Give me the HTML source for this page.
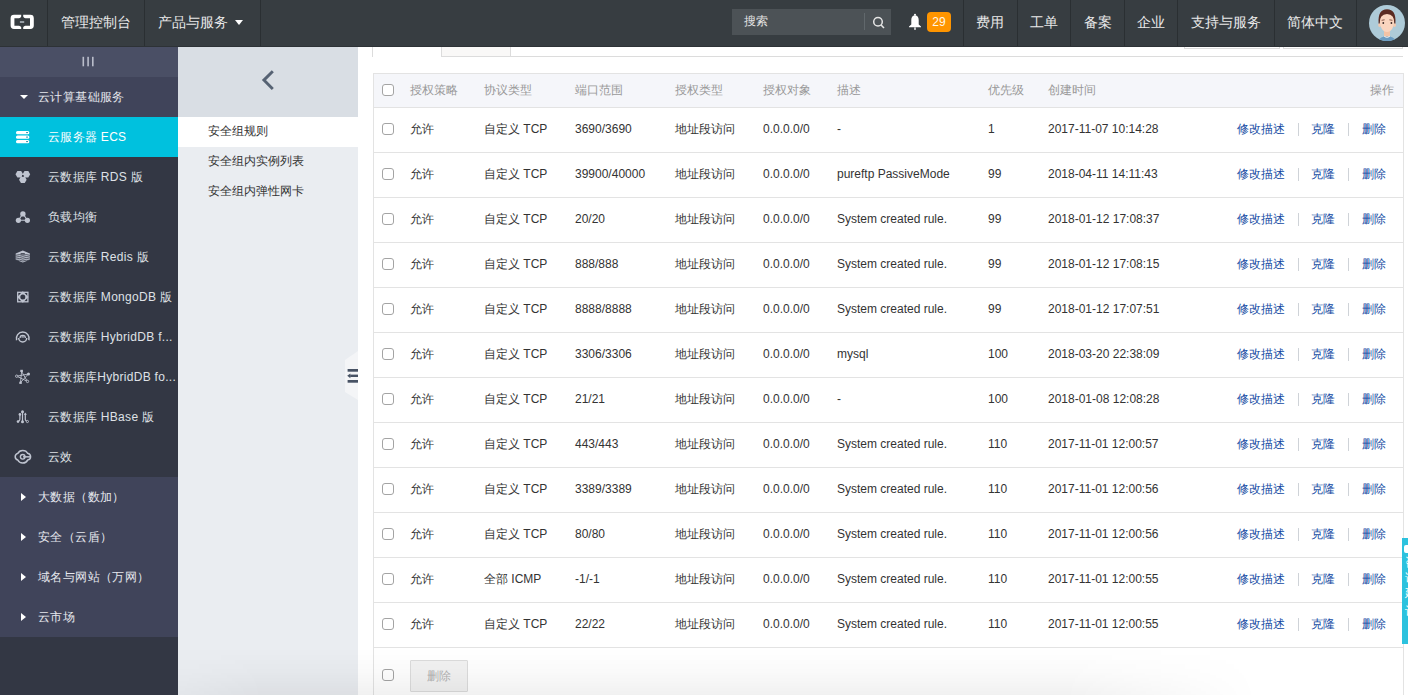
<!DOCTYPE html>
<html><head><meta charset="utf-8">
<style>
*{box-sizing:border-box;margin:0;padding:0}
html,body{width:1408px;height:695px;overflow:hidden;background:#fff;font-family:"Liberation Sans",sans-serif;font-size:12px;color:#333;position:relative}
div{position:absolute;white-space:nowrap}
#top{left:0;top:0;width:1408px;height:47px;background:#373d41;border-bottom:1px solid #2d3236;z-index:5}
.sec{top:0;height:46px;line-height:44px;font-size:14px;color:#e9e9e9}
.vs{top:0;width:1px;height:46px;background:#2a2f32}
#side{left:0;top:47px;width:178px;height:649px;background:#333744}
#main{left:358px;top:46px;width:1050px;height:649px}
.it{left:0;width:178px;height:40px;line-height:40px;color:#dfe1e6;font-size:12px}
.it .t{left:48px;top:0;letter-spacing:.3px}
.it .ic{left:16px;top:13px;width:14px;height:14px}
.grp{left:0;width:178px;height:40px;line-height:40px;color:#e6e8ee;background:#40445a}
.grp .t{left:38px;top:0;letter-spacing:.4px}
.tri{left:21px;top:16px;width:0;height:0;border-top:4px solid transparent;border-bottom:4px solid transparent;border-left:5px solid #fff}
#side2{left:178px;top:47px;width:180px;height:649px;background:#eaedf1}
.s2{left:0;width:180px;height:30px;line-height:28px;padding-left:30px;color:#333;font-size:12px}
.tbl{border:1px solid #e3e3e3;background:#fff}
.thead{background:#f5f6fa}
.th{height:34px;line-height:34px;color:#999;font-size:12px}
.td{height:45px;line-height:45px;color:#333;font-size:12px}
.a{color:#154ba3}
.hl{left:374px;width:1029px;height:1px;background:#e3e3e3}
.cb{width:12px;height:12px;border:1px solid #a4a4a4;border-radius:3px;background:#fff}
.sep{width:1px;height:13px;background:#cfd3d8}
.btn{width:58px;height:32px;line-height:30px;text-align:center;border:1px solid #dcdcdc;background:#f2f2f2;color:#b3b3b3;border-radius:1px}
</style></head>
<body>
<div id="top">
  <svg style="position:absolute;left:10px;top:14px" width="25" height="16" viewBox="0 0 25 16">
    <path d="M11.2 0.8 H4 Q0.6 0.8 0.6 4.2 V11.5 Q0.6 14.9 4 14.9 H11.2 V13.2 Q10.6 11.7 9 11.7 H4.4 V4.3 H9 Q10.6 4.3 11.2 2.5 Z" fill="#fff"/>
    <path d="M13.2 0.8 H20.4 Q23.8 0.8 23.8 4.2 V11.5 Q23.8 14.9 20.4 14.9 H13.2 V13.2 Q13.8 11.7 15.4 11.7 H20 V4.3 H15.4 Q13.8 4.3 13.2 2.5 Z" fill="#fff"/>
    <rect x="9.9" y="7.1" width="4.3" height="1.8" fill="#a0a8b0"/>
  </svg>
  <div class="vs" style="left:47px"></div>
  <div class="sec" style="left:61px">管理控制台</div>
  <div class="vs" style="left:144px"></div>
  <div class="sec" style="left:158px">产品与服务</div>
  <div style="left:235px;top:20px;width:0;height:0;border-left:4.5px solid transparent;border-right:4.5px solid transparent;border-top:5px solid #fff"></div>
  <div class="vs" style="left:260px"></div>

  <div style="left:732px;top:9px;width:159px;height:26px;background:#4c5256"></div>
  <div style="left:744px;top:0;height:43px;line-height:43px;font-size:12px;color:#e3e3e3">搜索</div>
  <div style="left:864px;top:13px;width:1px;height:17px;background:#61686c"></div>
  <svg style="position:absolute;left:872px;top:16px" width="13" height="13" viewBox="0 0 13 13">
    <circle cx="6" cy="5.7" r="4.3" fill="none" stroke="#e5e5e5" stroke-width="1.5"/>
    <path d="M8.8 8.8 L12 12" stroke="#e5e5e5" stroke-width="1.6"/>
  </svg>
  <svg style="position:absolute;left:908px;top:13px" width="14" height="18" viewBox="0 0 14 18">
    <circle cx="7" cy="1.7" r="1" fill="#fff"/>
    <path d="M7 2.3 C4.3 2.3 3.3 4.5 3.3 7 V11.6 L1 13.6 V14.2 H13 V13.6 L10.7 11.6 V7 C10.7 4.5 9.7 2.3 7 2.3 Z" fill="#fff"/>
    <rect x="6.3" y="14.4" width="1.4" height="2.5" fill="#fff"/>
  </svg>
  <div style="left:927px;top:12px;width:24px;height:20px;background:#ff9500;border-radius:4px;color:#fff7e8;font-size:12px;line-height:20px;text-align:center">29</div>
  <div class="vs" style="left:963px"></div>
  <div class="sec" style="left:976px">费用</div>
  <div class="vs" style="left:1017px"></div>
  <div class="sec" style="left:1030px">工单</div>
  <div class="vs" style="left:1070px"></div>
  <div class="sec" style="left:1084px">备案</div>
  <div class="vs" style="left:1124px"></div>
  <div class="sec" style="left:1137px">企业</div>
  <div class="vs" style="left:1177px"></div>
  <div class="sec" style="left:1191px">支持与服务</div>
  <div class="vs" style="left:1274px"></div>
  <div class="sec" style="left:1287px">简体中文</div>
  <div class="vs" style="left:1356px"></div>
  <svg style="position:absolute;left:1369px;top:5px" width="36" height="36" viewBox="0 0 36 36">
    <defs><clipPath id="av"><circle cx="18" cy="18" r="18"/></clipPath></defs>
    <g clip-path="url(#av)">
      <rect width="36" height="36" fill="#aecbd8"/>
      <path d="M8.5 37 Q10.5 31.5 18 31 Q25.5 31.5 27.5 37 Z" fill="#6a9cc2"/>
      <rect x="15" y="24" width="6" height="7.5" fill="#f3c3a5"/>
      <path d="M15.3 30.8 Q18 33 20.7 30.8 L20.7 31.8 Q18 33.5 15.3 31.8 Z" fill="#f4f4f4"/>
      <ellipse cx="10.6" cy="20" rx="1.4" ry="2.1" fill="#f3c8ad"/>
      <ellipse cx="25.6" cy="20" rx="1.4" ry="2.1" fill="#f3c8ad"/>
      <path d="M10.8 13 Q10.6 26.5 18 27 Q25.4 26.5 25.2 13 Q25 8.2 18 8.2 Q11 8.2 10.8 13 Z" fill="#fad5bf"/>
      <path d="M9.6 18.5 Q8.6 4.3 18 4.3 Q27.4 4.3 26.4 18.5 L25.3 18.5 Q25.6 9.2 18 9 Q10.4 9.2 10.7 18.5 Z" fill="#5b2b22"/>
      <path d="M12.6 15.3 L15.6 14.8 M20.4 14.8 L23.4 15.3" stroke="#6b3a2e" stroke-width="0.8"/>
      <ellipse cx="14.3" cy="18" rx="0.9" ry="1.1" fill="#3a2a26"/>
      <ellipse cx="22.4" cy="18" rx="0.9" ry="1.1" fill="#3a2a26"/>
    </g>
  </svg>
</div>

<div id="side">
  <div style="left:0;top:0;width:178px;height:30px;background:#4a4f65"></div>
  <svg style="position:absolute;left:80px;top:8px" width="16" height="14" viewBox="0 0 16 14"><g fill="#b9bdca"><rect x="2.5" y="1.8" width="1.6" height="9.5"/><rect x="7.3" y="1.8" width="1.6" height="9.5"/><rect x="12" y="1.8" width="1.6" height="9.5"/></g></svg>

  <div class="grp" style="top:30px"><div class="t">云计算基础服务</div>
    <div style="left:20px;top:18px;width:0;height:0;border-left:4px solid transparent;border-right:4px solid transparent;border-top:4px solid #fff"></div></div>

  <div class="it" style="top:70px;background:#00c1de;color:#fff"><div class="t">云服务器 ECS</div>
    <svg style="position:absolute;left:10px;top:8px" width="26" height="26" viewBox="0 0 26 26">
      <g fill="#fff"><rect x="6" y="6" width="13.3" height="3.2" rx="1.5"/><rect x="6" y="10.5" width="13.3" height="3.2" rx="1.5"/><rect x="6" y="15" width="13.3" height="3.2" rx="1.5"/></g>
      <g fill="#2a8fa6"><rect x="16.1" y="7.1" width="1.9" height="1"/><rect x="16.1" y="11.6" width="1.9" height="1"/><rect x="16.1" y="16.1" width="1.9" height="1"/></g>
    </svg></div>

  <div class="it" style="top:110px"><div class="t">云数据库 RDS 版</div>
    <svg style="position:absolute;left:10px;top:8px" width="26" height="26" viewBox="0 0 26 26"><g fill="#bfc4d0"><polygon points="13.10,9.30 11.20,12.59 7.40,12.59 5.50,9.30 7.40,6.01 11.20,6.01"/><polygon points="20.20,9.30 18.30,12.59 14.50,12.59 12.60,9.30 14.50,6.01 18.30,6.01"/><polygon points="16.65,14.80 14.75,18.09 10.95,18.09 9.05,14.80 10.95,11.51 14.75,11.51"/></g><circle cx="12.85" cy="10.9" r="0.9" fill="#333744"/></svg></div>

  <div class="it" style="top:150px"><div class="t">负载均衡</div>
    <svg style="position:absolute;left:10px;top:8px" width="26" height="26" viewBox="0 0 26 26"><path d="M12.9 8.8 L8.4 15.3 L17.4 15.3 Z" fill="none" stroke="#bfc4d0" stroke-width="1.1"/><g fill="#bfc4d0"><circle cx="12.9" cy="8.9" r="2.7"/><circle cx="8.4" cy="15.3" r="2.6"/><circle cx="17.4" cy="15.3" r="2.6"/></g></svg></div>

  <div class="it" style="top:190px"><div class="t">云数据库 Redis 版</div>
    <svg style="position:absolute;left:10px;top:8px" width="26" height="26" viewBox="0 0 26 26"><polygon points="12.8,5.6 19.9,8.6 19.9,14.8 12.8,17.6 5.7,14.8 5.7,8.6" fill="#bfc4d0"/><g stroke="#333744" stroke-width="0.75" fill="none"><path d="M5.5 10.3 L9.5 9.6 L12.8 10.4 L16.2 9.6 L20 10.3"/><path d="M5.5 12.2 L9.5 11.5 L12.8 12.3 L16.2 11.5 L20 12.2"/><path d="M5.5 14.1 L9.5 13.4 L12.8 14.2 L16.2 13.4 L20 14.1"/><path d="M5.5 15.9 L9.5 15.2 L12.8 16 L16.2 15.2 L20 15.9"/></g><rect x="10.6" y="8.2" width="4.2" height="1.3" fill="#333744"/></svg></div>

  <div class="it" style="top:230px"><div class="t">云数据库 MongoDB 版</div>
    <svg style="position:absolute;left:10px;top:8px" width="26" height="26" viewBox="0 0 26 26"><rect x="7.7" y="7.3" width="10.2" height="9.5" fill="none" stroke="#bfc4d0" stroke-width="1.3"/><polygon points="12.8,6.2 18.5,12 12.8,17.8 7.1,12" fill="#bfc4d0"/><circle cx="12.8" cy="12" r="2.5" fill="#333744"/></svg></div>

  <div class="it" style="top:270px"><div class="t">云数据库 HybridDB f...</div>
    <svg style="position:absolute;left:10px;top:8px" width="26" height="26" viewBox="0 0 26 26"><path d="M6.6 15.2 A6.4 6.4 0 1 1 18.9 15.2" fill="none" stroke="#bfc4d0" stroke-width="1.5"/><path d="M8.7 13 A4 4 0 0 0 16.7 13" fill="none" stroke="#bfc4d0" stroke-width="1.5"/><path d="M10 13 A2.7 2.7 0 0 1 15.4 13" fill="none" stroke="#bfc4d0" stroke-width="1.3"/><path d="M11.3 12.6 A1.4 1.4 0 0 1 14.1 12.6 Z" fill="#bfc4d0"/></svg></div>

  <div class="it" style="top:310px"><div class="t">云数据库HybridDB fo...</div>
    <svg style="position:absolute;left:10px;top:8px" width="26" height="26" viewBox="0 0 26 26"><g stroke="#bfc4d0" stroke-width="0.9" fill="none"><path d="M11.6 6.5 L10.5 17.5"/><path d="M6.8 11.2 L18.4 9"/><path d="M18.4 9 L10.5 17.5"/><path d="M11.6 6.5 L17.4 16.4"/><path d="M6.8 11.2 L17.4 16.4"/></g><g fill="#bfc4d0"><rect x="10.3" y="4.8" width="2.6" height="2.2"/><circle cx="18.5" cy="9" r="1.5"/><rect x="9.3" y="16.7" width="2.5" height="2.2"/></g><g fill="#333744" stroke="#bfc4d0" stroke-width="0.9"><circle cx="6.7" cy="11.2" r="1.2"/><circle cx="17.5" cy="16.4" r="1.2"/></g></svg></div>

  <div class="it" style="top:350px"><div class="t">云数据库 HBase 版</div>
    <svg style="position:absolute;left:10px;top:8px" width="26" height="26" viewBox="0 0 26 26"><g stroke="#bfc4d0" stroke-width="1.2" fill="none"><path d="M12.5 6.8 V16.8"/><path d="M9.9 9.3 V14.3 Q9.9 15.6 8.2 16.5"/><path d="M15.3 9 V14.5 Q15.3 15.6 16.9 16.3"/></g><g fill="#bfc4d0"><circle cx="12.5" cy="6.8" r="1.5"/><circle cx="12.5" cy="16.8" r="1.5"/><circle cx="9.9" cy="9.4" r="1.3"/><circle cx="8" cy="16.6" r="1.3"/><path d="M15.3 7.6 L13.7 9.8 H16.9 Z"/></g><circle cx="17.4" cy="16.5" r="1.1" fill="#333744" stroke="#bfc4d0" stroke-width="0.9"/></svg></div>

  <div class="it" style="top:390px"><div class="t">云效</div>
    <svg style="position:absolute;left:10px;top:8px" width="26" height="26" viewBox="0 0 26 26"><path d="M7.8 8.4 Q9.2 5.4 12.7 5.4 Q16.3 5.4 17.6 8.3 Q20.6 9 20.6 11.7 Q20.6 14.4 17.6 15.1 Q16.3 18 12.7 18 Q9.2 18 7.8 15 Q5.2 14.2 5.2 11.7 Q5.2 9.2 7.8 8.4 Z" fill="none" stroke="#bfc4d0" stroke-width="1.5"/><circle cx="12.7" cy="11.8" r="2.3" fill="none" stroke="#bfc4d0" stroke-width="1.4"/><rect x="13" y="11.1" width="7.2" height="1.5" fill="#bfc4d0"/></svg></div>

  <div class="grp" style="top:430px"><div class="t">大数据（数加）</div><div class="tri"></div></div>
  <div class="grp" style="top:470px"><div class="t">安全（云盾）</div><div class="tri"></div></div>
  <div class="grp" style="top:510px"><div class="t">域名与网站（万网）</div><div class="tri"></div></div>
  <div class="grp" style="top:550px"><div class="t">云市场</div><div class="tri"></div></div>
</div>

<div id="side2">
  <div style="left:0;top:0;width:180px;height:70px;background:#d9dee4"></div>
  <svg style="position:absolute;left:72px;top:13px" width="40" height="40" viewBox="0 0 40 40">
    <path d="M22.8 11.2 L13.9 20.1 L22.8 29" fill="none" stroke="#566273" stroke-width="2.9"/>
  </svg>
  <div class="s2" style="top:70px;background:#fff">安全组规则</div>
  <div class="s2" style="top:100px">安全组内实例列表</div>
  <div class="s2" style="top:130px">安全组内弹性网卡</div>
</div>

<div id="main">
  <div style="left:14px;top:0;width:1px;height:11px;background:#dcdcdc"></div>
  <div style="left:83px;top:0;width:70px;height:11px;background:#f9f8f7;border:1px solid #dcdcdc;border-top:none"></div>
  <div style="left:153px;top:10px;width:892px;height:1px;background:#dcdcdc"></div>
  <div style="left:826px;top:0;width:96px;height:3px;border:1px solid #dcdcdc;border-top:none"></div>
  <div style="left:925px;top:0;width:120px;height:3px;border:1px solid #dcdcdc;border-top:none"></div>
</div>
<div class="tbl" style="left:373px;top:73px;width:1031px;height:627px"></div>
<div class="thead" style="left:374px;top:74px;width:1029px;height:34px"></div>
<div class="cb" style="left:382px;top:84px"></div>
<div class="th" style="left:410px;top:73px">授权策略</div>
<div class="th" style="left:484px;top:73px">协议类型</div>
<div class="th" style="left:575px;top:73px">端口范围</div>
<div class="th" style="left:675px;top:73px">授权类型</div>
<div class="th" style="left:763px;top:73px">授权对象</div>
<div class="th" style="left:837px;top:73px">描述</div>
<div class="th" style="left:988px;top:73px">优先级</div>
<div class="th" style="left:1048px;top:73px">创建时间</div>
<div class="th" style="left:1300px;width:94px;text-align:right;top:73px">操作</div>
<div class="hl" style="top:107px"></div>
<div class="cb" style="left:382px;top:123px"></div>
<div class="td" style="left:410px;top:107px">允许</div>
<div class="td" style="left:484px;top:107px">自定义 TCP</div>
<div class="td" style="left:575px;top:107px">3690/3690</div>
<div class="td" style="left:675px;top:107px">地址段访问</div>
<div class="td" style="left:763px;top:107px">0.0.0.0/0</div>
<div class="td" style="left:837px;top:107px">-</div>
<div class="td" style="left:988px;top:107px">1</div>
<div class="td" style="left:1048px;top:107px">2017-11-07 10:14:28</div>
<div class="td a" style="left:1237px;top:107px">修改描述</div>
<div class="sep" style="left:1298px;top:123px"></div>
<div class="td a" style="left:1311px;top:107px">克隆</div>
<div class="sep" style="left:1348px;top:123px"></div>
<div class="td a" style="left:1362px;top:107px">删除</div>
<div class="hl" style="top:152px"></div>
<div class="cb" style="left:382px;top:168px"></div>
<div class="td" style="left:410px;top:152px">允许</div>
<div class="td" style="left:484px;top:152px">自定义 TCP</div>
<div class="td" style="left:575px;top:152px">39900/40000</div>
<div class="td" style="left:675px;top:152px">地址段访问</div>
<div class="td" style="left:763px;top:152px">0.0.0.0/0</div>
<div class="td" style="left:837px;top:152px">pureftp PassiveMode</div>
<div class="td" style="left:988px;top:152px">99</div>
<div class="td" style="left:1048px;top:152px">2018-04-11 14:11:43</div>
<div class="td a" style="left:1237px;top:152px">修改描述</div>
<div class="sep" style="left:1298px;top:168px"></div>
<div class="td a" style="left:1311px;top:152px">克隆</div>
<div class="sep" style="left:1348px;top:168px"></div>
<div class="td a" style="left:1362px;top:152px">删除</div>
<div class="hl" style="top:197px"></div>
<div class="cb" style="left:382px;top:213px"></div>
<div class="td" style="left:410px;top:197px">允许</div>
<div class="td" style="left:484px;top:197px">自定义 TCP</div>
<div class="td" style="left:575px;top:197px">20/20</div>
<div class="td" style="left:675px;top:197px">地址段访问</div>
<div class="td" style="left:763px;top:197px">0.0.0.0/0</div>
<div class="td" style="left:837px;top:197px">System created rule.</div>
<div class="td" style="left:988px;top:197px">99</div>
<div class="td" style="left:1048px;top:197px">2018-01-12 17:08:37</div>
<div class="td a" style="left:1237px;top:197px">修改描述</div>
<div class="sep" style="left:1298px;top:213px"></div>
<div class="td a" style="left:1311px;top:197px">克隆</div>
<div class="sep" style="left:1348px;top:213px"></div>
<div class="td a" style="left:1362px;top:197px">删除</div>
<div class="hl" style="top:242px"></div>
<div class="cb" style="left:382px;top:258px"></div>
<div class="td" style="left:410px;top:242px">允许</div>
<div class="td" style="left:484px;top:242px">自定义 TCP</div>
<div class="td" style="left:575px;top:242px">888/888</div>
<div class="td" style="left:675px;top:242px">地址段访问</div>
<div class="td" style="left:763px;top:242px">0.0.0.0/0</div>
<div class="td" style="left:837px;top:242px">System created rule.</div>
<div class="td" style="left:988px;top:242px">99</div>
<div class="td" style="left:1048px;top:242px">2018-01-12 17:08:15</div>
<div class="td a" style="left:1237px;top:242px">修改描述</div>
<div class="sep" style="left:1298px;top:258px"></div>
<div class="td a" style="left:1311px;top:242px">克隆</div>
<div class="sep" style="left:1348px;top:258px"></div>
<div class="td a" style="left:1362px;top:242px">删除</div>
<div class="hl" style="top:287px"></div>
<div class="cb" style="left:382px;top:303px"></div>
<div class="td" style="left:410px;top:287px">允许</div>
<div class="td" style="left:484px;top:287px">自定义 TCP</div>
<div class="td" style="left:575px;top:287px">8888/8888</div>
<div class="td" style="left:675px;top:287px">地址段访问</div>
<div class="td" style="left:763px;top:287px">0.0.0.0/0</div>
<div class="td" style="left:837px;top:287px">System created rule.</div>
<div class="td" style="left:988px;top:287px">99</div>
<div class="td" style="left:1048px;top:287px">2018-01-12 17:07:51</div>
<div class="td a" style="left:1237px;top:287px">修改描述</div>
<div class="sep" style="left:1298px;top:303px"></div>
<div class="td a" style="left:1311px;top:287px">克隆</div>
<div class="sep" style="left:1348px;top:303px"></div>
<div class="td a" style="left:1362px;top:287px">删除</div>
<div class="hl" style="top:332px"></div>
<div class="cb" style="left:382px;top:348px"></div>
<div class="td" style="left:410px;top:332px">允许</div>
<div class="td" style="left:484px;top:332px">自定义 TCP</div>
<div class="td" style="left:575px;top:332px">3306/3306</div>
<div class="td" style="left:675px;top:332px">地址段访问</div>
<div class="td" style="left:763px;top:332px">0.0.0.0/0</div>
<div class="td" style="left:837px;top:332px">mysql</div>
<div class="td" style="left:988px;top:332px">100</div>
<div class="td" style="left:1048px;top:332px">2018-03-20 22:38:09</div>
<div class="td a" style="left:1237px;top:332px">修改描述</div>
<div class="sep" style="left:1298px;top:348px"></div>
<div class="td a" style="left:1311px;top:332px">克隆</div>
<div class="sep" style="left:1348px;top:348px"></div>
<div class="td a" style="left:1362px;top:332px">删除</div>
<div class="hl" style="top:377px"></div>
<div class="cb" style="left:382px;top:393px"></div>
<div class="td" style="left:410px;top:377px">允许</div>
<div class="td" style="left:484px;top:377px">自定义 TCP</div>
<div class="td" style="left:575px;top:377px">21/21</div>
<div class="td" style="left:675px;top:377px">地址段访问</div>
<div class="td" style="left:763px;top:377px">0.0.0.0/0</div>
<div class="td" style="left:837px;top:377px">-</div>
<div class="td" style="left:988px;top:377px">100</div>
<div class="td" style="left:1048px;top:377px">2018-01-08 12:08:28</div>
<div class="td a" style="left:1237px;top:377px">修改描述</div>
<div class="sep" style="left:1298px;top:393px"></div>
<div class="td a" style="left:1311px;top:377px">克隆</div>
<div class="sep" style="left:1348px;top:393px"></div>
<div class="td a" style="left:1362px;top:377px">删除</div>
<div class="hl" style="top:422px"></div>
<div class="cb" style="left:382px;top:438px"></div>
<div class="td" style="left:410px;top:422px">允许</div>
<div class="td" style="left:484px;top:422px">自定义 TCP</div>
<div class="td" style="left:575px;top:422px">443/443</div>
<div class="td" style="left:675px;top:422px">地址段访问</div>
<div class="td" style="left:763px;top:422px">0.0.0.0/0</div>
<div class="td" style="left:837px;top:422px">System created rule.</div>
<div class="td" style="left:988px;top:422px">110</div>
<div class="td" style="left:1048px;top:422px">2017-11-01 12:00:57</div>
<div class="td a" style="left:1237px;top:422px">修改描述</div>
<div class="sep" style="left:1298px;top:438px"></div>
<div class="td a" style="left:1311px;top:422px">克隆</div>
<div class="sep" style="left:1348px;top:438px"></div>
<div class="td a" style="left:1362px;top:422px">删除</div>
<div class="hl" style="top:467px"></div>
<div class="cb" style="left:382px;top:483px"></div>
<div class="td" style="left:410px;top:467px">允许</div>
<div class="td" style="left:484px;top:467px">自定义 TCP</div>
<div class="td" style="left:575px;top:467px">3389/3389</div>
<div class="td" style="left:675px;top:467px">地址段访问</div>
<div class="td" style="left:763px;top:467px">0.0.0.0/0</div>
<div class="td" style="left:837px;top:467px">System created rule.</div>
<div class="td" style="left:988px;top:467px">110</div>
<div class="td" style="left:1048px;top:467px">2017-11-01 12:00:56</div>
<div class="td a" style="left:1237px;top:467px">修改描述</div>
<div class="sep" style="left:1298px;top:483px"></div>
<div class="td a" style="left:1311px;top:467px">克隆</div>
<div class="sep" style="left:1348px;top:483px"></div>
<div class="td a" style="left:1362px;top:467px">删除</div>
<div class="hl" style="top:512px"></div>
<div class="cb" style="left:382px;top:528px"></div>
<div class="td" style="left:410px;top:512px">允许</div>
<div class="td" style="left:484px;top:512px">自定义 TCP</div>
<div class="td" style="left:575px;top:512px">80/80</div>
<div class="td" style="left:675px;top:512px">地址段访问</div>
<div class="td" style="left:763px;top:512px">0.0.0.0/0</div>
<div class="td" style="left:837px;top:512px">System created rule.</div>
<div class="td" style="left:988px;top:512px">110</div>
<div class="td" style="left:1048px;top:512px">2017-11-01 12:00:56</div>
<div class="td a" style="left:1237px;top:512px">修改描述</div>
<div class="sep" style="left:1298px;top:528px"></div>
<div class="td a" style="left:1311px;top:512px">克隆</div>
<div class="sep" style="left:1348px;top:528px"></div>
<div class="td a" style="left:1362px;top:512px">删除</div>
<div class="hl" style="top:557px"></div>
<div class="cb" style="left:382px;top:573px"></div>
<div class="td" style="left:410px;top:557px">允许</div>
<div class="td" style="left:484px;top:557px">全部 ICMP</div>
<div class="td" style="left:575px;top:557px">-1/-1</div>
<div class="td" style="left:675px;top:557px">地址段访问</div>
<div class="td" style="left:763px;top:557px">0.0.0.0/0</div>
<div class="td" style="left:837px;top:557px">System created rule.</div>
<div class="td" style="left:988px;top:557px">110</div>
<div class="td" style="left:1048px;top:557px">2017-11-01 12:00:55</div>
<div class="td a" style="left:1237px;top:557px">修改描述</div>
<div class="sep" style="left:1298px;top:573px"></div>
<div class="td a" style="left:1311px;top:557px">克隆</div>
<div class="sep" style="left:1348px;top:573px"></div>
<div class="td a" style="left:1362px;top:557px">删除</div>
<div class="hl" style="top:602px"></div>
<div class="cb" style="left:382px;top:618px"></div>
<div class="td" style="left:410px;top:602px">允许</div>
<div class="td" style="left:484px;top:602px">自定义 TCP</div>
<div class="td" style="left:575px;top:602px">22/22</div>
<div class="td" style="left:675px;top:602px">地址段访问</div>
<div class="td" style="left:763px;top:602px">0.0.0.0/0</div>
<div class="td" style="left:837px;top:602px">System created rule.</div>
<div class="td" style="left:988px;top:602px">110</div>
<div class="td" style="left:1048px;top:602px">2017-11-01 12:00:55</div>
<div class="td a" style="left:1237px;top:602px">修改描述</div>
<div class="sep" style="left:1298px;top:618px"></div>
<div class="td a" style="left:1311px;top:602px">克隆</div>
<div class="sep" style="left:1348px;top:618px"></div>
<div class="td a" style="left:1362px;top:602px">删除</div>
<div class="hl" style="top:647px"></div>
<div class="cb" style="left:382px;top:669px"></div>
<div class="btn" style="left:410px;top:660px">删除</div>

<svg style="position:absolute;left:343px;top:351px" width="16" height="50" viewBox="0 0 16 50">
  <path d="M15 0 L15 49 L2 41 L2 9 Z" fill="#f4f5f7"/>
  <rect x="4.6" y="18" width="10.4" height="2.7" fill="#475264"/>
  <rect x="7.2" y="23.6" width="7.8" height="2.4" fill="#475264"/>
  <path d="M4.2 24.8 L7.4 22.4 V27.2 Z" fill="#475264"/>
  <rect x="4.6" y="29" width="10.4" height="2.7" fill="#475264"/>
</svg>
<div style="left:178px;top:648px;width:1080px;height:47px;background:linear-gradient(to bottom, rgba(0,0,0,0) 0%, rgba(0,0,0,0.02) 50%, rgba(0,0,0,0.055) 100%);-webkit-mask-image:linear-gradient(to right, rgba(0,0,0,.5) 0%, #000 8%, #000 82%, transparent 100%)"></div>
<div style="left:1402px;top:538px;width:6px;height:106px;background:#2cc2de;overflow:hidden">
  <div style="left:2px;top:7px;width:12px;height:8px;background:#fff;border-radius:2px"></div>
  <div style="left:3px;top:18px;font-size:12px;line-height:12px;color:#fff">咨</div>
  <div style="left:3px;top:34px;font-size:12px;line-height:12px;color:#fff">询</div>
  <div style="left:3px;top:49px;font-size:12px;line-height:12px;color:#fff">建</div>
  <div style="left:3px;top:67px;font-size:12px;line-height:12px;color:#fff">议</div>
</div>
</body></html>
